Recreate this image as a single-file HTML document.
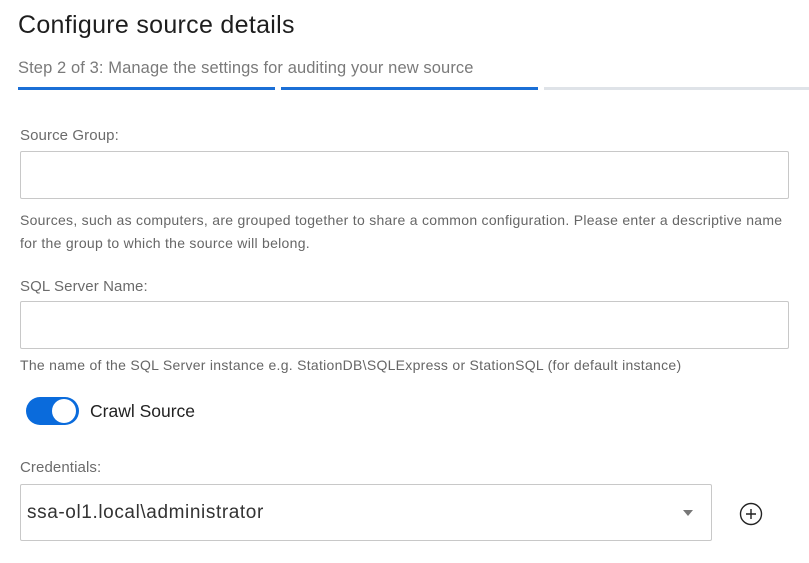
<!DOCTYPE html>
<html><head><meta charset="utf-8"><style>
body{margin:0;width:809px;height:563px;background:#fff;font-family:"Liberation Sans",sans-serif;position:relative;overflow:hidden}
.a{position:absolute;white-space:nowrap}
.lbl{font-size:15px;color:#6b6b6b;letter-spacing:0.1px}
.help{font-size:14px;color:#666;letter-spacing:0.28px}
.box{position:absolute;border:1px solid #c8c8c8;border-radius:2px;box-sizing:border-box}
</style></head><body>
<div class="a" style="left:18px;top:11px;font-size:25px;color:#1e1e1e;letter-spacing:0.3px">Configure source details</div>
<div class="a" style="left:18px;top:59px;font-size:16.5px;color:#7a7a7a;letter-spacing:0.1px">Step 2 of 3: Manage the settings for auditing your new source</div>
<div class="a" style="left:18px;top:87px;width:257px;height:3px;background:#1b6fd6"></div>
<div class="a" style="left:281px;top:87px;width:257px;height:3px;background:#1b6fd6"></div>
<div class="a" style="left:544px;top:87px;width:265px;height:3px;background:#dfe3e8"></div>
<div class="a lbl" style="left:20px;top:127px">Source Group:</div>
<div class="box" style="left:20px;top:151px;width:769px;height:48px"></div>
<div class="a help" style="left:20px;top:212px">Sources, such as computers, are grouped together to share a common configuration. Please enter a descriptive name</div>
<div class="a help" style="left:20px;top:235px">for the group to which the source will belong.</div>
<div class="a lbl" style="left:20px;top:278px">SQL Server Name:</div>
<div class="box" style="left:20px;top:301px;width:769px;height:48px"></div>
<div class="a help" style="left:20px;top:357px">The name of the SQL Server instance e.g. StationDB\SQLExpress or StationSQL (for default instance)</div>
<div class="a" style="left:26px;top:397px;width:53px;height:28px;border-radius:14px;background:#0a6bdc"></div>
<div class="a" style="left:52px;top:399px;width:24px;height:24px;border-radius:12px;background:#fff"></div>
<div class="a" style="left:90px;top:401px;font-size:17.5px;color:#222">Crawl Source</div>
<div class="a lbl" style="left:20px;top:459px">Credentials:</div>
<div class="box" style="left:20px;top:484px;width:692px;height:57px"></div>
<div class="a" style="left:27px;top:502px;font-size:19px;color:#333;letter-spacing:0.6px">ssa-ol1.local\administrator</div>
<div class="a" style="left:683px;top:510px;width:0;height:0;border-left:5px solid transparent;border-right:5px solid transparent;border-top:6px solid #777"></div>
<svg class="a" style="left:739px;top:502px" width="24" height="24" viewBox="0 0 24 24"><circle cx="12" cy="12" r="10.5" fill="none" stroke="#222" stroke-width="1.4"/><path d="M12 7v10M7 12h10" stroke="#222" stroke-width="1.4"/></svg>
</body></html>
